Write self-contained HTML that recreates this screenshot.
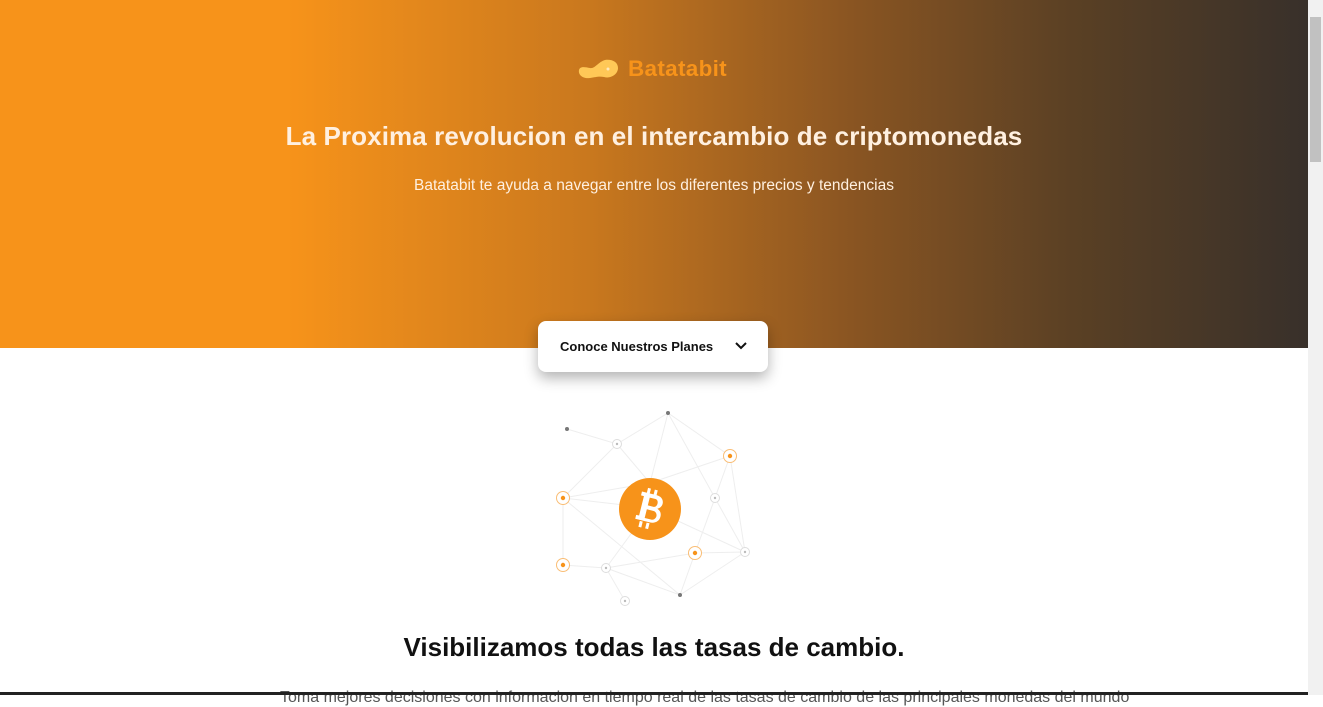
<!DOCTYPE html>
<html><head><meta charset="utf-8"><style>
*{margin:0;padding:0;box-sizing:border-box}
html,body{width:1323px;height:695px;overflow:hidden;background:#fff;font-family:"Liberation Sans",sans-serif}
.hero{position:absolute;left:0;top:0;width:1308px;height:348px;background:linear-gradient(90deg,#F7931A 0%,#F7931A 22%,#c9781e 45%,#8a5522 65%,#5a4024 82%,#38302a 100%);text-align:center;color:#fff}
.logo{position:absolute;left:577px;top:56px;display:flex;align-items:center}
.logo span{font-weight:bold;font-size:22.5px;color:#F7931A;margin-left:7px;letter-spacing:0.3px}
h1{position:absolute;top:121px;left:0;width:1308px;font-size:26px;font-weight:bold;color:#fff0e0;letter-spacing:0.1px}
.sub{position:absolute;top:177px;left:0;width:1308px;font-size:15.5px;color:#fff0e0}
.btn{position:absolute;left:538px;top:321px;width:230px;height:51px;background:#fff;border-radius:8px;box-shadow:0 6px 14px rgba(0,0,0,.3);font-size:13px;font-weight:bold;color:#111;display:flex;align-items:center;padding-left:22px}
.btn svg{position:absolute;right:20px;top:20px}
h2{position:absolute;top:632px;left:0;width:1308px;text-align:center;font-size:26px;font-weight:bold;color:#111}
.bottom{position:absolute;top:689px;left:280px;font-size:16px;color:#555;white-space:nowrap}
.line{position:absolute;left:0;top:692px;width:1308px;height:3px;background:#222}
.sb{position:absolute;left:1308px;top:0;width:15px;height:695px;background:#f1f1f1}
.thumb{position:absolute;left:1310px;top:17px;width:11px;height:145px;background:#c1c1c1}
</style></head><body>
<div class="hero">
 <div class="logo"><svg width="44" height="26" viewBox="0 0 44 26"><path d="M2 14c1-4 6-3 11-2s8-6 15-8c7-1 13 2 13 8s-7 11-14 9c-5-1-8 0-14 1C6 23 1 19 2 14z" fill="#FFC857"/><circle cx="31" cy="13" r="1.5" fill="#fff" opacity=".6"/></svg><span>Batatabit</span></div>
 <h1>La Proxima revolucion en el intercambio de criptomonedas</h1>
 <p class="sub">Batatabit te ayuda a navegar entre los diferentes precios y tendencias</p>
</div>
<div class="btn">Conoce Nuestros Planes<svg width="14" height="10" viewBox="0 0 14 10"><path d="M2 2l5 5 5-5" stroke="#111" stroke-width="2" fill="none"/></svg></div>
<svg style="position:absolute;left:530px;top:400px" width="240" height="215" viewBox="0 0 240 215">
<g stroke="#eee" stroke-width="1" fill="none">
<path d="M37 29L87 44L138 13L200 56L185 98L215 152L150 195L76 168L95 201M87 44L33 98L33 165L76 168L165 153L215 152M33 98L120 83L200 56M138 13L120 83M200 56L215 152M33 98L150 195M87 44L120 83M138 13L185 98L165 153L150 195M33 98L120 108L215 152M76 168L120 108"/>
</g>
<circle cx="120" cy="109" r="31" fill="#F7931A"/>
<g transform="rotate(14 120 109)" fill="#fff">
<rect x="113" y="89" width="3" height="6"/><rect x="120" y="89" width="3" height="6"/>
<rect x="113" y="123" width="3" height="6"/><rect x="120" y="123" width="3" height="6"/>
<path d="M108 94h15c5 0 8 3 8 7 0 3-2 5-4 6 3 1 5 3 5 7 0 5-4 8-9 8h-15v-4h3v-20h-3zM117 98v8h6c2 0 3-2 3-4s-1-4-3-4zM117 110v9h7c2 0 4-2 4-4.5s-2-4.5-4-4.5z" fill-rule="evenodd"/>
</g>
<g fill="#777"><circle cx="37" cy="29" r="2"/><circle cx="138" cy="13" r="2"/><circle cx="150" cy="195" r="2"/></g>
<g fill="#fff" stroke="#ddd"><circle cx="87" cy="44" r="4.5"/><circle cx="185" cy="98" r="4.5"/><circle cx="215" cy="152" r="4.5"/><circle cx="76" cy="168" r="4.5"/><circle cx="95" cy="201" r="4.5"/></g>
<g fill="#bbb"><circle cx="87" cy="44" r="1.2"/><circle cx="185" cy="98" r="1.2"/><circle cx="215" cy="152" r="1.2"/><circle cx="76" cy="168" r="1.2"/><circle cx="95" cy="201" r="1.2"/></g>
<g fill="#fff" stroke="#F7931A" stroke-opacity=".6"><circle cx="200" cy="56" r="6.5"/><circle cx="33" cy="98" r="6.5"/><circle cx="33" cy="165" r="6.5"/><circle cx="165" cy="153" r="6.5"/></g>
<g fill="#F7931A"><circle cx="200" cy="56" r="2.2"/><circle cx="33" cy="98" r="2.2"/><circle cx="33" cy="165" r="2.2"/><circle cx="165" cy="153" r="2.2"/></g>
</svg>
<h2>Visibilizamos todas las tasas de cambio.</h2>
<div class="bottom">Toma mejores decisiones con informacion en tiempo real de las tasas de cambio de las principales monedas del mundo</div>
<div class="line"></div>
<div class="sb"></div><div class="thumb"></div>
</body></html>
